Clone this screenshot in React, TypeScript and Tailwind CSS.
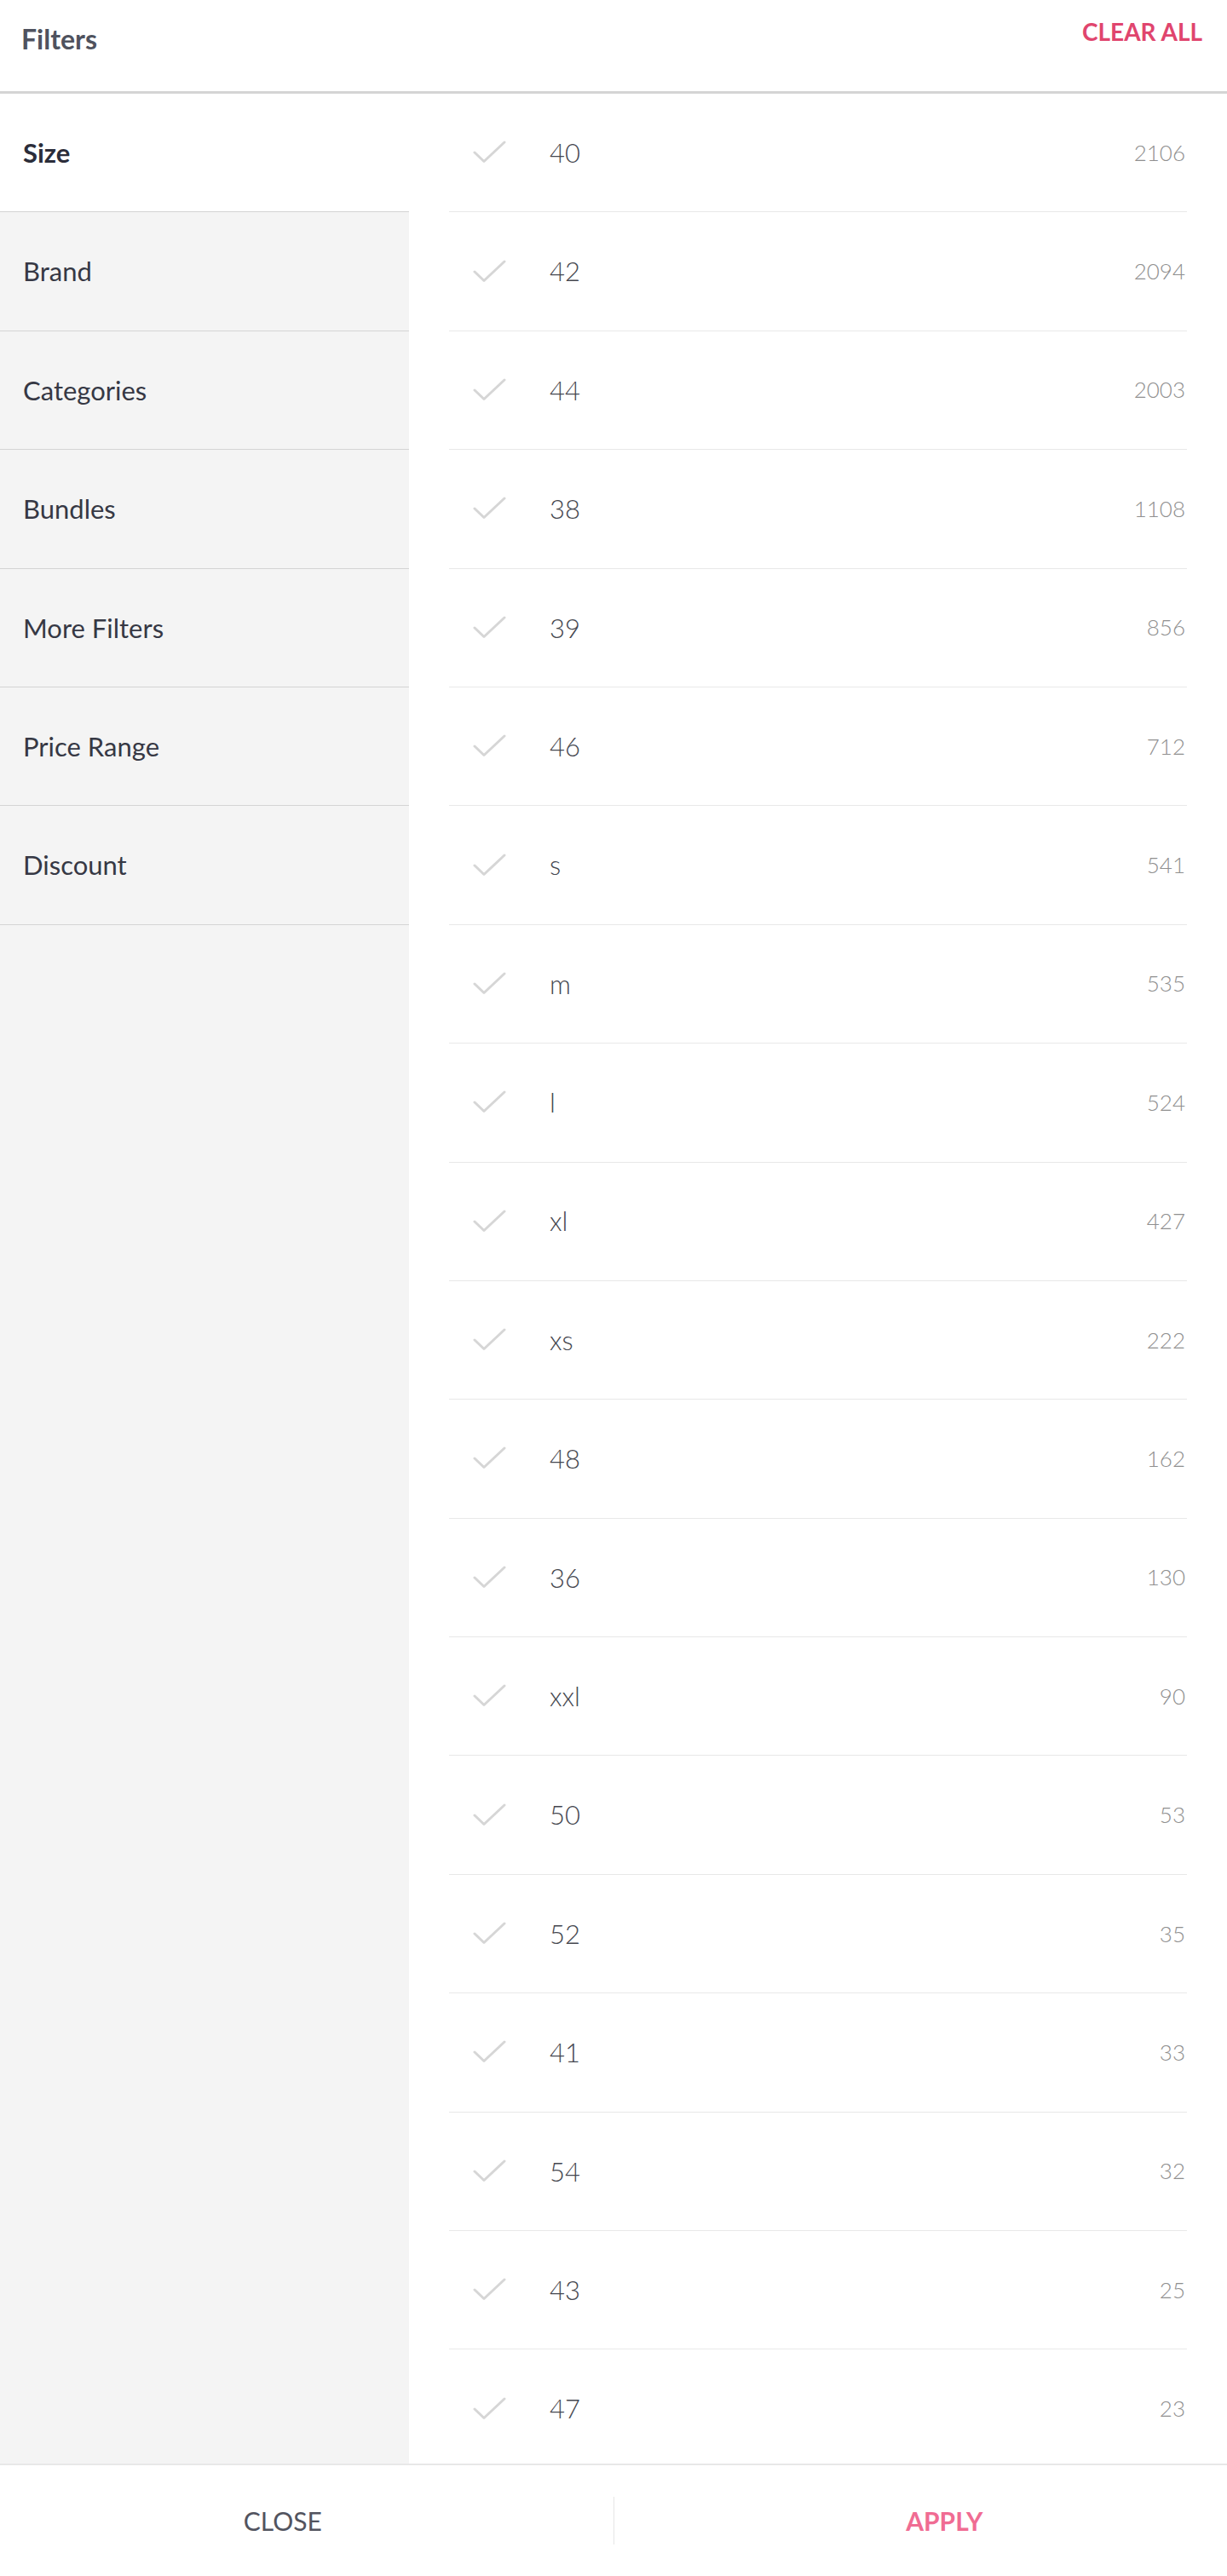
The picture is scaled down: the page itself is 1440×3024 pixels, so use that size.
import React from 'react';

const groups = ['Size', 'Brand', 'Categories', 'Bundles', 'More Filters', 'Price Range', 'Discount'];

const sizes: [string, number][] = [
  ['40', 2106],
  ['42', 2094],
  ['44', 2003],
  ['38', 1108],
  ['39', 856],
  ['46', 712],
  ['s', 541],
  ['m', 535],
  ['l', 524],
  ['xl', 427],
  ['xs', 222],
  ['48', 162],
  ['36', 130],
  ['xxl', 90],
  ['50', 53],
  ['52', 35],
  ['41', 33],
  ['54', 32],
  ['43', 25],
  ['47', 23],
];

function Check() {
  return (
    <svg width="40" height="28" viewBox="0 0 40 28" fill="none" className="shrink-0">
      <path d="M2 14 L13 24.5 L37 2" stroke="#d6d6d6" strokeWidth="3" strokeLinecap="round" strokeLinejoin="round" />
    </svg>
  );
}

export default function App() {
  const active = 'Size';

  return (
    <div className="flex h-[3024px] w-[1440px] flex-col overflow-hidden bg-white font-['Lato','Noto_Sans',sans-serif]">
      <header className="flex h-[110px] shrink-0 items-start justify-between border-b-[3px] border-[#d4d4d4] pl-[25px] pr-[29px]">
        <h1 className="pt-[30px] text-[32px] leading-none font-bold text-[#4f525e]">Filters</h1>
        <button className="pt-[23px] text-[28px] leading-none font-bold text-[#e0456e]">CLEAR ALL</button>
      </header>

      <div className="flex min-h-0 flex-1">
        <aside className="w-[480px] shrink-0 bg-[#f4f4f4]">
          {groups.map((g) => (
            <div
              key={g}
              className={`flex h-[139.4px] items-center border-b border-[#d4d4d4] pl-[27px] text-[31px] ${
                g === active ? 'bg-white font-bold text-[#2b2d3a]' : 'text-[#363844]'
              }`}
            >
              {g}
            </div>
          ))}
        </aside>

        <div className="min-w-0 flex-1 overflow-hidden px-[47px]">
          {sizes.map(([label, count]) => (
            <div key={label} className="flex h-[139.4px] items-center border-b border-[#e8e8e8] pl-[28px]">
              <Check />
              <span className="ml-[50px] text-[31px] font-light text-[#45474f]">{label}</span>
              <span className="ml-auto pr-[2px] text-[26px] font-light text-[#8f8f8f]">{count}</span>
            </div>
          ))}
        </div>
      </div>

      <footer className="flex h-[132px] shrink-0 items-center border-t-2 border-[#e8e8e8]">
        <button className="flex-1 pr-[56px] text-[30px] text-[#52545f]">CLOSE</button>
        <div className="h-[56px] w-px bg-[#e6e6e6]" />
        <button className="flex-1 pl-[56px] text-[30px] font-bold text-[#f06c93]">APPLY</button>
      </footer>
    </div>
  );
}
